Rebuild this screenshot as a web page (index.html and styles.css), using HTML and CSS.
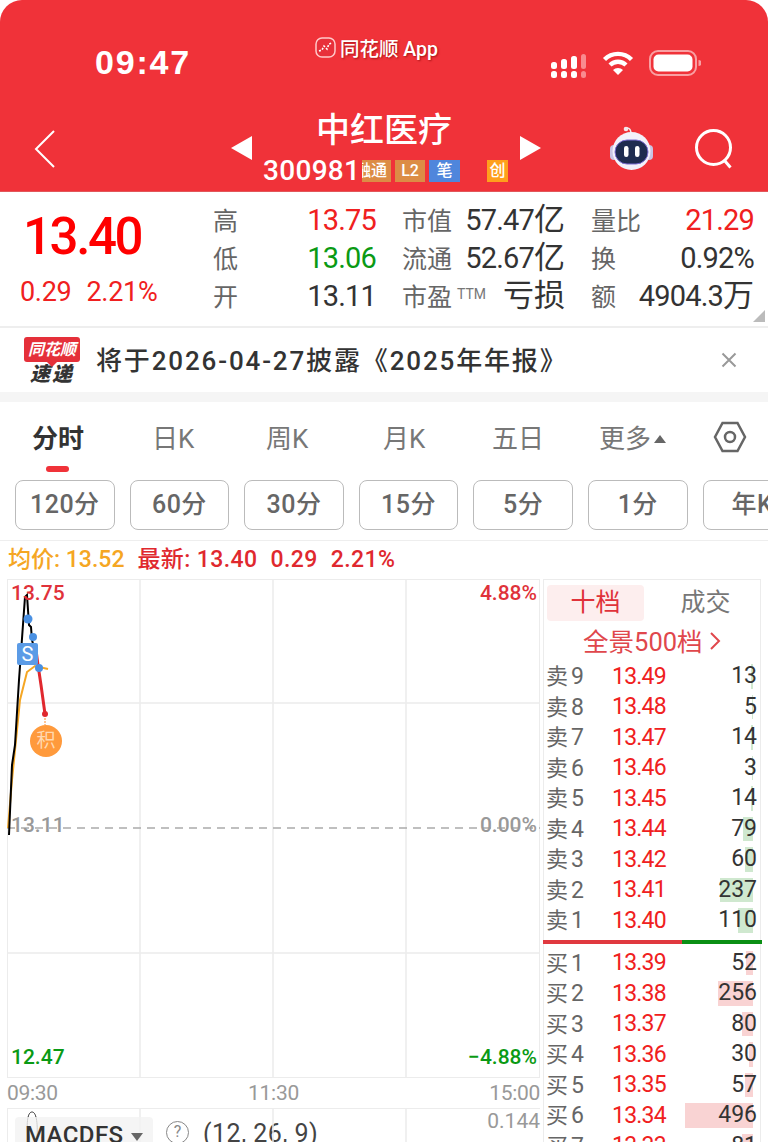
FILE: index.html
```html
<!DOCTYPE html>
<html lang="zh-CN">
<head>
  <meta charset="UTF-8" />
  <title>中红医疗 300981</title>
  <link rel="stylesheet" href="styles.css">
</head>
<body>
<div class="screen">

  <!-- red header -->
  <header class="header">
    <div class="status">
      <div class="time">09:47</div>
      <div class="app-pill">
        <svg width="21" height="21" viewBox="0 0 21 21">
          <rect x="1" y="1" width="19" height="19" rx="6" fill="#e8303a" stroke="#ffc9c9" stroke-width="1.5"/>
          <path d="M4 14l3-1 2-4 3 3 2-5 3-1" fill="none" stroke="#fff" stroke-width="1.6" stroke-dasharray="2 1.5"/>
        </svg>
        <span>同花顺 App</span>
      </div>
      <div class="status-icons">
        <svg width="36" height="24" viewBox="0 0 36 24" fill="#fff">
          <rect x="0" y="8" width="6" height="7" rx="2.5"/><rect x="10" y="5" width="6" height="10" rx="2.5"/>
          <rect x="20" y="2" width="6" height="13" rx="2.5"/><rect x="30" y="0" width="5" height="15" rx="2.5" fill="#f98b8f"/>
          <rect x="0" y="17" width="6" height="7" rx="2.5"/><rect x="10" y="17" width="6" height="7" rx="2.5"/>
          <rect x="20" y="17" width="6" height="7" rx="2.5"/><rect x="30" y="17" width="5" height="7" rx="2.5" fill="#f98b8f"/>
        </svg>
        <svg width="32" height="26" viewBox="0 0 32 26" fill="none" stroke="#fff" stroke-width="4.4">
          <path d="M2.5 9.5a19 19 0 0 1 27 0"/>
          <path d="M8 15a11.500 11.500 0 0 1 16 0"/>
          <path d="M16 25l-5-5a7 7 0 0 1 10 0z" fill="#fff" stroke="none"/>
        </svg>
        <svg width="52" height="26" viewBox="0 0 52 26">
          <rect x="1" y="1" width="46" height="24" rx="8" fill="none" stroke="#f9a0a3" stroke-width="2"/>
          <rect x="4.500" y="4.500" width="39" height="17" rx="5" fill="#fff"/>
          <path d="M49.500 10a3 3 0 0 1 0 6z" fill="#f9a0a3"/>
        </svg>
      </div>
    </div>
    <div class="nav">
      <svg class="back" width="24" height="40" viewBox="0 0 24 40">
        <path d="M21 2L3 20l18 18" fill="none" stroke="#fff" stroke-width="2"/>
      </svg>
      <div class="arrow arrow-left"></div>
      <div class="stock">
        <div class="stock-name">中红医疗</div>
        <div class="stock-code">
          <span class="code">300981</span>
          <span class="badge badge-cut">融通</span>
          <span class="badge badge-tan">L2</span>
          <span class="badge badge-blue">笔</span>
          <span class="badge badge-gem">创</span>
        </div>
      </div>
      <div class="arrow arrow-right"></div>
      <div class="nav-tools">
        <svg width="48" height="46" viewBox="0 0 48 46">
          <path d="M23 8c0-4-1-6-4-6" fill="none" stroke="#eee" stroke-width="1.500"/>
          <circle cx="18" cy="3" r="2.300" fill="#f4e6ea"/>
          <rect x="2" y="19" width="8" height="15" rx="4" fill="#c9c4e4"/>
          <rect x="37" y="19" width="8" height="15" rx="4" fill="#c9c4e4"/>
          <ellipse cx="23.500" cy="25" rx="19" ry="19" fill="#f3f1fa"/>
          <rect x="7" y="14" width="33" height="24" rx="12" fill="#1f2c50" stroke="#7a6cd0" stroke-width="1"/>
          <rect x="16" y="20" width="4.500" height="11" rx="2.200" fill="#fff"/>
          <rect x="27" y="20" width="4.500" height="11" rx="2.200" fill="#fff"/>
        </svg>
        <svg width="40" height="40" viewBox="0 0 40 40" fill="none" stroke="#fff" stroke-width="3">
          <circle cx="18.500" cy="18.500" r="17"/>
          <path d="M29.500 31.500l6 7"/>
        </svg>
      </div>
    </div>
  </header>

  <!-- quote -->
  <section class="quote">
    <div class="price-box">
      <div class="price">13.40</div>
      <div class="change"><span>0.29</span><span>2.21%</span></div>
    </div>
    <div class="stats">
      <div class="stat"><span class="lbl">高</span><span class="val up">13.75</span></div>
      <div class="stat"><span class="lbl">市值</span><span class="val">57.47<span class="unit">亿</span></span></div>
      <div class="stat"><span class="lbl">量比</span><span class="val up">21.29</span></div>
      <div class="stat"><span class="lbl">低</span><span class="val down">13.06</span></div>
      <div class="stat"><span class="lbl">流通</span><span class="val">52.67<span class="unit">亿</span></span></div>
      <div class="stat"><span class="lbl">换</span><span class="val">0.92%</span></div>
      <div class="stat"><span class="lbl">开</span><span class="val">13.11</span></div>
      <div class="stat"><span class="lbl">市盈<small>TTM</small></span><span class="val"><span class="unit">亏损</span></span></div>
      <div class="stat"><span class="lbl">额</span><span class="val">4904.3<span class="unit">万</span></span></div>
    </div>
    <div class="corner"></div>
  </section>

  <!-- notice -->
  <section class="notice">
    <div class="news-logo">
      <div class="news-top">同花顺</div>
      <div class="news-bottom">速递</div>
    </div>
    <div class="notice-text">将于2026-04-27披露《2025年年报》</div>
    <svg class="notice-close" width="16" height="16" viewBox="0 0 16 16">
      <path d="M1.500 1.500l13 13M14.500 1.500l-13 13" stroke="#999" stroke-width="2"/>
    </svg>
  </section>

  <!-- chart tabs -->
  <nav class="tabs">
    <div class="tab tab-on">分时</div>
    <div class="tab">日K</div>
    <div class="tab">周K</div>
    <div class="tab">月K</div>
    <div class="tab">五日</div>
    <div class="tab tab-more">更多<i class="tri"></i></div>
    <svg class="hex" width="34" height="32" viewBox="0 0 34 32" fill="none" stroke="#666" stroke-width="2.500">
      <path d="M9.500 2h15L32 16l-7.500 14h-15L2 16z"/>
      <circle cx="17" cy="16" r="5"/>
    </svg>
  </nav>

  <div class="periods">
    <div class="period">120分</div>
    <div class="period">60分</div>
    <div class="period">30分</div>
    <div class="period">15分</div>
    <div class="period">5分</div>
    <div class="period">1分</div>
    <div class="period">年K</div>
  </div>

  <div class="legend">
    <span class="avg">均价: 13.52</span>
    <span class="last">最新: 13.40</span>
    <span class="last">0.29</span>
    <span class="last">2.21%</span>
  </div>

  <div class="main">
    <div class="left">
      <div class="chart">
        <svg class="plot" width="533" height="499" viewBox="7 579 533 499">
          <g stroke="#ececec" stroke-width="1.500">
            <path d="M140 579v499M273 579v499M406 579v499"/>
            <path d="M7 703h533M7 953h533"/>
          </g>
          <path d="M7 828h533" stroke="#aaa" stroke-width="1.500" stroke-dasharray="8 6"/>
          <path d="M8 828l4-48 8-80 7-28 8-6 13 3" fill="none" stroke="#f5a623" stroke-width="2"/>
          <path d="M9 835l3-70 3-20 4-65 6-83 2-2 2 30 2 2 1 13 4 15" fill="none" stroke="#000" stroke-width="2"/>
          <path d="M36 650l2 15 3 20 4 29" fill="none" stroke="#e0282e" stroke-width="3"/>
          <circle cx="28" cy="619" r="4.500" fill="#4a90e2"/>
          <circle cx="33" cy="637" r="4" fill="#4a90e2"/>
          <circle cx="39" cy="668" r="4" fill="#4a90e2"/>
          <circle cx="45" cy="714" r="3" fill="#e0282e"/>
          <path d="M45 718v7" stroke="#ffb271" stroke-width="1.500" stroke-dasharray="2 1"/>
        </svg>
        <div class="mark-s">S</div>
        <div class="mark-ji">积</div>
        <span class="axis ax-hi up-soft">13.75</span>
        <span class="axis ax-hi-pct up-soft">4.88%</span>
        <span class="axis ax-mid">13.11</span>
        <span class="axis ax-mid-pct">0.00%</span>
        <span class="axis ax-lo down">12.47</span>
        <span class="axis ax-lo-pct down">−4.88%</span>
      </div>
      <div class="times"><span>09:30</span><span>11:30</span><span>15:00</span></div>
      <div class="macd">
        <svg class="macd-lines" width="533" height="34" viewBox="0 0 533 34">
          <path d="M133 0v34M266 0v34M399 0v34" stroke="#ececec" stroke-width="1.500"/>
          <path d="M21 30C19 12 21 3 25 3s6 9 5 27" fill="none" stroke="#333" stroke-width="1"/>
        </svg>
        <div class="macd-chip">MACDFS<i class="tri-down"></i></div>
        <div class="help">?</div>
        <div class="macd-args">(12, 26, 9)</div>
        <div class="macd-val">0.144</div>
      </div>
    </div>

    <aside class="book">
      <div class="book-tabs">
        <div class="book-tab book-tab-on">十档</div>
        <div class="book-tab">成交</div>
      </div>
      <div class="book-link">全景500档
        <svg width="12" height="20" viewBox="0 0 12 20"><path d="M2 2l8 8-8 8" fill="none" stroke="#e0474c" stroke-width="2"/></svg>
      </div>
      <div class="rows">
        <div class="row"><span class="side">卖<b>9</b></span><span class="px">13.49</span><span class="vol"><i class="bar sell" style="width:2px"></i><em>13</em></span></div>
        <div class="row"><span class="side">卖<b>8</b></span><span class="px">13.48</span><span class="vol"><i class="bar sell" style="width:1px"></i><em>5</em></span></div>
        <div class="row"><span class="side">卖<b>7</b></span><span class="px">13.47</span><span class="vol"><i class="bar sell" style="width:2px"></i><em>14</em></span></div>
        <div class="row"><span class="side">卖<b>6</b></span><span class="px">13.46</span><span class="vol"><i class="bar sell" style="width:1px"></i><em>3</em></span></div>
        <div class="row"><span class="side">卖<b>5</b></span><span class="px">13.45</span><span class="vol"><i class="bar sell" style="width:2px"></i><em>14</em></span></div>
        <div class="row"><span class="side">卖<b>4</b></span><span class="px">13.44</span><span class="vol"><i class="bar sell" style="width:10px"></i><em>79</em></span></div>
        <div class="row"><span class="side">卖<b>3</b></span><span class="px">13.42</span><span class="vol"><i class="bar sell" style="width:8px"></i><em>60</em></span></div>
        <div class="row"><span class="side">卖<b>2</b></span><span class="px">13.41</span><span class="vol"><i class="bar sell" style="width:33px"></i><em>237</em></span></div>
        <div class="row"><span class="side">卖<b>1</b></span><span class="px">13.40</span><span class="vol"><i class="bar sell" style="width:15px"></i><em>110</em></span></div>
      </div>
      <div class="split"><div class="split-red"></div><div class="split-green"></div></div>
      <div class="rows">
        <div class="row"><span class="side">买<b>1</b></span><span class="px">13.39</span><span class="vol"><i class="bar buy" style="width:7px"></i><em>52</em></span></div>
        <div class="row"><span class="side">买<b>2</b></span><span class="px">13.38</span><span class="vol"><i class="bar buy" style="width:35px"></i><em>256</em></span></div>
        <div class="row"><span class="side">买<b>3</b></span><span class="px">13.37</span><span class="vol"><i class="bar buy" style="width:11px"></i><em>80</em></span></div>
        <div class="row"><span class="side">买<b>4</b></span><span class="px">13.36</span><span class="vol"><i class="bar buy" style="width:4px"></i><em>30</em></span></div>
        <div class="row"><span class="side">买<b>5</b></span><span class="px">13.35</span><span class="vol"><i class="bar buy" style="width:8px"></i><em>57</em></span></div>
        <div class="row"><span class="side">买<b>6</b></span><span class="px">13.34</span><span class="vol"><i class="bar buy" style="width:68px"></i><em>496</em></span></div>
        <div class="row"><span class="side">买<b>7</b></span><span class="px">13.33</span><span class="vol"><i class="bar buy" style="width:11px"></i><em>81</em></span></div>
      </div>
    </aside>
  </div>

</div>
</body>
</html>
```

FILE: styles.css
```css
* {
  box-sizing: border-box;
}

body {
  margin: 0;
  background: #fff;
  font-family: Roboto, "Noto Sans CJK SC", sans-serif;
  color: #333;
}

.screen {
  width: 768px;
  height: 1142px;
  overflow: hidden;
}

/* header */
.header {
  height: 192px;
  background: #f03239;
  border-radius: 22px 22px 0 0;
  border-bottom: 1px solid #e2575b;
  color: #fff;
}

.status {
  height: 106px;
  display: flex;
}

.time {
  width: 95px;
  margin: 43px 0 0 95px;
  font-family: "Liberation Sans", sans-serif;
  font-weight: bold;
  font-size: 34px;
  line-height: 38px;
  letter-spacing: 1.800px;
}

.app-pill {
  flex: none;
  margin: 37px 0 0 125px;
  display: flex;
  align-items: center;
  gap: 4px;
  width: 122px;
  height: 21px;
  font-size: 19.500px;
  font-weight: 500;
  white-space: nowrap;
  text-shadow: 1px 1px 2px rgba(120,0,0,0.6);
}

.app-pill svg {
  flex: none;
}

.status-icons {
  margin: 50px 0 0 114px;
  display: flex;
  align-items: flex-start;
  gap: 15px;
}

.status-icons svg:first-child {
  margin-top: 4px;
}

.nav {
  height: 85px;
  display: grid;
  grid-template-columns: 231px 21px 268px 21px 1fr;
  align-items: center;
}

.back {
  margin-left: 33px;
  margin-top: 1px;
}

.arrow {
  width: 0;
  height: 0;
  border-top: 12px solid transparent;
  border-bottom: 12px solid transparent;
  margin-top: -2px;
}

.arrow-left {
  border-right: 21px solid #fff;
}

.arrow-right {
  border-left: 21px solid #fff;
}

.stock {
  display: flex;
  flex-direction: column;
  align-items: center;
  margin-top: -2px;
}

.stock-name {
  font-size: 34px;
  font-weight: 500;
  line-height: 46px;
  margin: -4px 4px 4px 0;
}

.stock-code {
  width: 100%;
  padding-left: 11px;
  display: flex;
  align-items: center;
  height: 28px;
}

.code {
  flex: none;
  font-size: 28px;
  font-weight: 500;
  width: 99px;
  letter-spacing: 0.3px;
}

.badge {
  height: 22px;
  margin-right: 4px;
  font-size: 16px;
  line-height: 22px;
  text-align: center;
  white-space: nowrap;
  overflow: hidden;
  font-weight: 500;
}

.badge-cut {
  width: 29px;
  background: #dc8c45;
  display: flex;
  justify-content: flex-end;
  padding-right: 4px;
}

.badge-tan {
  width: 30px;
  background: #dc8c45;
}

.badge-blue {
  width: 31px;
  background: #4f86dc;
}

.badge-gem {
  width: 21px;
  background: #ff9f1c;
  margin-left: 23px;
}

.nav-tools {
  padding-left: 67px;
  display: flex;
  align-items: center;
  gap: 39px;
}

/* quote block */
.quote {
  height: 134px;
  display: flex;
  position: relative;
}

.price-box {
  width: 213px;
  padding-left: 20px;
}

.price {
  margin: 19px 0 0 3px;
  font-size: 51px;
  font-weight: 500;
  line-height: 52px;
  letter-spacing: -2.400px;
  color: #f00;
}

.change {
  margin-top: 12px;
  display: flex;
  gap: 15px;
  font-size: 27px;
  line-height: 34px;
  letter-spacing: -0.3px;
  color: #f02020;
}

.stats {
  flex: 1;
  padding: 9px 14px 0 0;
  display: grid;
  grid-template-columns: 163px 163px 163px;
  grid-auto-rows: 38px;
  column-gap: 26px;
}

.stat {
  display: flex;
  justify-content: space-between;
  align-items: center;
}

.lbl {
  padding-bottom: 3px;
  font-size: 25px;
  color: #666;
  white-space: nowrap;
}

.lbl small {
  font-size: 14px;
  color: #777;
  margin-left: 5px;
  vertical-align: 7px;
}

.val {
  font-size: 29px;
  line-height: 38px;
  letter-spacing: -0.8px;
  color: #333;
  white-space: nowrap;
}

.unit {
  font-size: 31px;
  line-height: 30px;
  letter-spacing: 0;
}

.up {
  color: #f02020;
}

.down {
  color: #0a9a14;
}

.corner {
  position: absolute;
  right: 3px;
  bottom: 4px;
  width: 0;
  height: 0;
  border-left: 12px solid transparent;
  border-bottom: 12px solid #bbb;
}

/* notice */
.notice {
  height: 76px;
  padding: 0 31px 0 24px;
  border-top: 2px solid #eee;
  border-bottom: 10px solid #f5f5f5;
  display: flex;
  align-items: center;
}

.news-logo {
  width: 56px;
  margin: 2px 16px 0 0;
  text-align: center;
}

.news-top {
  position: relative;
  height: 25px;
  background: #e5303a;
  border-radius: 3px;
  color: #fff;
  font-size: 16px;
  line-height: 25px;
  font-style: italic;
  font-weight: bold;
}

.news-top::after {
  content: "";
  position: absolute;
  left: 23px;
  bottom: -5px;
  border-left: 5px solid transparent;
  border-right: 5px solid transparent;
  border-top: 5px solid #e5303a;
}

.news-bottom {
  margin-top: 1px;
  font-size: 20px;
  line-height: 22px;
  font-style: italic;
  font-weight: 900;
  color: #333;
  letter-spacing: 2px;
}

.notice-text {
  flex: 1;
  padding-bottom: 4px;
  font-size: 26px;
  font-weight: 500;
  letter-spacing: 1.850px;
  color: #333;
  white-space: nowrap;
}

/* tabs */
.tabs {
  height: 78px;
  display: flex;
  font-size: 26px;
  color: #777;
}

.tab {
  position: relative;
  width: 52px;
  margin-top: 18px;
  line-height: 38px;
  white-space: nowrap;
}

.tab:nth-child(1) { margin-left: 32px; }
.tab:nth-child(2) { margin-left: 68px; }
.tab:nth-child(3) { margin-left: 62px; }
.tab:nth-child(4) { margin-left: 65px; }
.tab:nth-child(5) { margin-left: 57px; }
.tab:nth-child(6) { margin-left: 55px; }

.tab-on {
  color: #333;
  font-weight: 700;
}

.tab-on::after {
  content: "";
  position: absolute;
  left: 14px;
  top: 46px;
  width: 23px;
  height: 6px;
  border-radius: 3px;
  background: #f03239;
}

.tri {
  display: inline-block;
  margin-left: 3px;
  vertical-align: 5px;
  border-left: 6px solid transparent;
  border-right: 6px solid transparent;
  border-bottom: 8px solid #666;
}

.hex {
  margin: 19px 0 0 62px;
}

.periods {
  height: 61px;
  padding-left: 15px;
  border-bottom: 1px solid #eee;
  display: flex;
  gap: 15px;
}

.period {
  flex: none;
  width: 99.600px;
  height: 50px;
  border: 1.5px solid #bbb;
  border-radius: 8px;
  font-size: 25px;
  font-weight: 500;
  line-height: 48px;
  letter-spacing: 0.5px;
  text-align: center;
  color: #666;
}

.legend {
  height: 38px;
  padding-left: 8px;
  display: flex;
  gap: 13px;
  font-size: 23px;
  font-weight: 500;
  line-height: 38px;
  white-space: nowrap;
}

.avg {
  color: #f5a623;
}

.last {
  color: #e0282e;
  letter-spacing: 0.4px;
}

/* chart + order book */
.main {
  display: flex;
  padding-left: 7px;
}

.left {
  width: 533px;
}

.chart {
  position: relative;
  height: 499px;
  border: 1.5px solid #ececec;
}

.plot {
  position: absolute;
  left: -1.5px;
  top: -1.5px;
}

.mark-s {
  position: absolute;
  left: 9px;
  top: 63px;
  width: 21px;
  height: 22px;
  background: #5b9be6;
  border-radius: 2px;
  color: #fff;
  font-size: 20px;
  line-height: 22px;
  text-align: center;
}

.mark-ji {
  position: absolute;
  left: 22px;
  top: 145px;
  width: 32px;
  height: 32px;
  border-radius: 50%;
  background: #ff9a3c;
  color: #ffd9b0;
  font-size: 19px;
  line-height: 32px;
  text-align: center;
}

.axis {
  position: absolute;
  font-size: 21px;
  font-weight: 500;
  line-height: 26px;
}

.ax-hi { left: 3px; top: 0; }
.ax-hi-pct { right: 2px; top: 0; }
.ax-mid { left: 3px; top: 232px; color: #999; }
.ax-mid-pct { right: 2px; top: 232px; color: #999; }
.ax-lo { left: 3px; top: 464px; }
.ax-lo-pct { right: 2px; top: 464px; }

.up-soft {
  color: #e0323a;
}

.times {
  height: 30px;
  display: flex;
  justify-content: space-between;
  font-size: 21px;
  line-height: 30px;
  letter-spacing: -0.3px;
  color: #999;
}

.macd {
  position: relative;
  height: 40px;
  border-top: 1.5px solid #ececec;
  border-left: 1.5px solid #ececec;
  display: flex;
  align-items: flex-start;
}

.macd-lines {
  position: absolute;
  left: -1.5px;
  top: 0;
}

.macd-chip {
  position: relative;
  margin: 8px 0 0 7px;
  width: 138px;
  height: 36px;
  padding-left: 10px;
  background: rgba(242,242,242,0.8);
  border-radius: 4px;
  font-size: 24px;
  font-weight: 500;
  line-height: 36px;
  letter-spacing: 0.4px;
  color: #333;
  white-space: nowrap;
}

.tri-down {
  display: inline-block;
  margin-left: 8px;
  vertical-align: 2px;
  border-left: 6px solid transparent;
  border-right: 6px solid transparent;
  border-top: 8px solid #666;
}

.help {
  margin: 12px 0 0 13px;
  width: 23px;
  height: 23px;
  border: 1.5px solid #888;
  border-radius: 50%;
  font-size: 16px;
  line-height: 20px;
  text-align: center;
  color: #888;
}

.macd-args {
  margin: 8px 0 0 14px;
  font-size: 25px;
  line-height: 34px;
  letter-spacing: 0.5px;
  white-space: nowrap;
  color: #444;
}

.macd-val {
  position: absolute;
  right: 0;
  top: 0;
  font-size: 21px;
  line-height: 24px;
  color: #999;
}

/* order book */
.book {
  width: 218px;
  height: 563px;
  margin-left: 3px;
  border-top: 1.5px solid #ececec;
  border-right: 1.5px solid #ececec;
  border-left: 1.5px solid #ececec;
}

.book-tabs {
  display: flex;
  gap: 13px;
  padding: 5px 0 0 3px;
}

.book-tab {
  flex: none;
  width: 97px;
  height: 36px;
  border-radius: 4px;
  font-size: 25px;
  line-height: 36px;
  text-align: center;
  color: #777;
}

.book-tab-on {
  background: #fdeeee;
  color: #e0323a;
}

.book-link {
  height: 40px;
  text-align: center;
  font-size: 25.500px;
  line-height: 42px;
  white-space: nowrap;
  color: #e0474c;
}

.row {
  height: 30.500px;
  padding-left: 2px;
  display: flex;
  align-items: center;
}

.side {
  width: 66px;
  padding-bottom: 4px;
  font-size: 22px;
  color: #666;
}

.side b {
  font-weight: 400;
  font-size: 23px;
  margin-left: 3px;
}

.px {
  width: 70px;
  font-size: 23px;
  letter-spacing: -0.8px;
  color: #f02020;
}

.vol {
  position: relative;
  flex: 1;
  height: 100%;
  padding-right: 3px;
  text-align: right;
  font-size: 23px;
  line-height: 30px;
}

.vol em {
  position: relative;
  font-style: normal;
  color: #333;
}

.bar {
  position: absolute;
  right: 7px;
  top: 3px;
  bottom: 3px;
}

.sell {
  background: #cfe8cf;
}

.buy {
  background: #f9d3d3;
}

.split {
  display: flex;
  height: 4px;
  margin: 4px -1.5px 4px -1.5px;
}

.split-red {
  width: 139px;
  background: #e0393f;
}

.split-green {
  flex: 1;
  background: #0a8f14;
}
```
